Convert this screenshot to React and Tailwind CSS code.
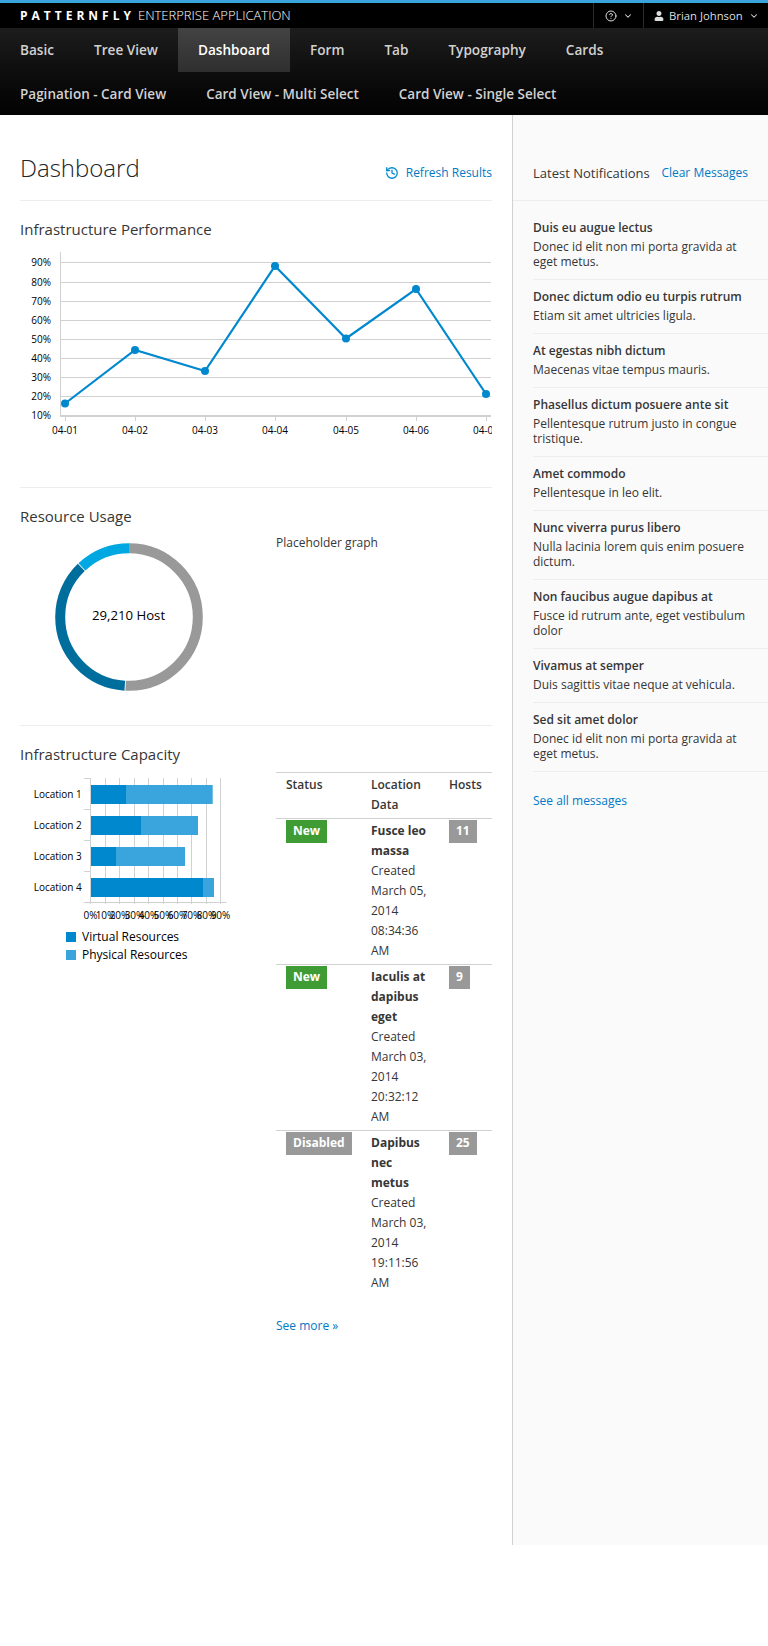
import { ChevronDown, CircleHelp, History } from "lucide-react";
import { FaUser } from "react-icons/fa";

const navRows = [
  ["Basic", "Tree View", "Dashboard", "Form", "Tab", "Typography", "Cards"],
  ["Pagination - Card View", "Card View - Multi Select", "Card View - Single Select"],
];

const notifications = [
  ["Duis eu augue lectus", "Donec id elit non mi porta gravida at eget metus."],
  ["Donec dictum odio eu turpis rutrum", "Etiam sit amet ultricies ligula."],
  ["At egestas nibh dictum", "Maecenas vitae tempus mauris."],
  ["Phasellus dictum posuere ante sit", "Pellentesque rutrum justo in congue tristique."],
  ["Amet commodo", "Pellentesque in leo elit."],
  ["Nunc viverra purus libero", "Nulla lacinia lorem quis enim posuere dictum."],
  ["Non faucibus augue dapibus at", "Fusce id rutrum ante, eget vestibulum dolor"],
  ["Vivamus at semper", "Duis sagittis vitae neque at vehicula."],
  ["Sed sit amet dolor", "Donec id elit non mi porta gravida at eget metus."],
];

const rows = [
  { status: "New", color: "bg-[#3f9c35]", title: "Fusce leo massa", date: "March 05, 2014 08:34:36 AM", hosts: 11 },
  { status: "New", color: "bg-[#3f9c35]", title: "Iaculis at dapibus eget", date: "March 03, 2014 20:32:12 AM", hosts: 9 },
  { status: "Disabled", color: "bg-[#999999]", title: "Dapibus nec metus", date: "March 03, 2014 19:11:56 AM", hosts: 25 },
];

const linePoints = [
  [65, 403.5],
  [135, 350],
  [205, 371],
  [275, 266],
  [346, 338.5],
  [416, 289],
  [486, 394],
];
const lineGrid = [
  [262.5, "90%"],
  [282.5, "80%"],
  [301.5, "70%"],
  [320.5, "60%"],
  [339.5, "50%"],
  [358.5, "40%"],
  [377.5, "30%"],
  [396.5, "20%"],
  [415.5, "10%"],
];
const lineDates = ["04-01", "04-02", "04-03", "04-04", "04-05", "04-06", "04-07"];

const LineChart = () => (
  <svg width="472" height="190" viewBox="20 250 472 190" className="block">
    {lineGrid.map(([y, label]) => (
      <g key={label}>
        <line x1="60" x2="491" y1={y} y2={y} stroke="#d1d1d1" strokeWidth="1" />
        <text x="51" y={y + 3.5} textAnchor="end" fontSize="10" fill="#000">{label}</text>
      </g>
    ))}
    <line x1="60.5" x2="60.5" y1="252" y2="417" stroke="#d1d1d1" />
    <line x1="60" x2="491" y1="416.5" y2="416.5" stroke="#d1d1d1" />
    {linePoints.map(([x], i) => (
      <g key={i}>
        <line x1={x + 0.5} x2={x + 0.5} y1="417" y2="421" stroke="#d1d1d1" />
        <text x={x} y="434" textAnchor="middle" fontSize="10" fill="#000">{lineDates[i]}</text>
      </g>
    ))}
    <polyline points={linePoints.map((p) => p.join(",")).join(" ")} fill="none" stroke="#0088ce" strokeWidth="2.2" />
    {linePoints.map(([x, y], i) => (
      <circle key={i} cx={x} cy={y} r="4" fill="#0088ce" />
    ))}
  </svg>
);

const Donut = () => (
  <svg width="150" height="150" viewBox="-75 -75 150 150" className="block">
    <circle r="68.8" fill="none" stroke="#999999" strokeWidth="10" pathLength="100" strokeDasharray="50.8 49.2" transform="rotate(-90)" />
    <circle r="68.8" fill="none" stroke="#006e9c" strokeWidth="10" pathLength="100" strokeDasharray="36.8 63.2" strokeDashoffset="-51" transform="rotate(-90)" />
    <circle r="68.8" fill="none" stroke="#00a8e1" strokeWidth="10" pathLength="100" strokeDasharray="12 88" strokeDashoffset="-88" transform="rotate(-90)" />
    <text x="-0.5" y="3" textAnchor="middle" fontSize="13.2" fill="#000">29,210 Host</text>
  </svg>
);

const barData = [
  ["Location 1", 785, 126, 212.7],
  ["Location 2", 816, 141, 198],
  ["Location 3", 847, 116, 185],
  ["Location 4", 878, 203, 214],
];
const barTicks = [90.5, 105.5, 119.5, 134.5, 148.5, 163.5, 177.5, 191.5, 206.5, 220.5];

const BarChart = () => (
  <svg width="236" height="148" viewBox="20 775 236 148" className="block">
    {barTicks.map((x, i) => (
      <g key={x}>
        <line x1={x} x2={x} y1="778" y2="904" stroke="#d1d1d1" />
        <text x={x} y="919" textAnchor="middle" fontSize="10" fill="#000">{i * 10}%</text>
      </g>
    ))}
    <line x1="90.5" x2="226.7" y1="902.5" y2="902.5" stroke="#d1d1d1" />
    {[778.5, 809.5, 840.5, 871.5, 902.5].map((y) => (
      <line key={y} x1="84" x2="90.5" y1={y} y2={y} stroke="#d1d1d1" />
    ))}
    {barData.map(([label, y, a, b]) => (
      <g key={label}>
        <rect x="91" y={y} width={a - 91} height="19" fill="#0088ce" />
        <rect x={a} y={y} width={b - a} height="19" fill="#39a5dc" />
        <text x="33.7" y={y + 13} fontSize="10" fill="#000">{label}</text>
      </g>
    ))}
  </svg>
);

const App = () => (
  <div className="h-[1646px] bg-white font-['Open_Sans',sans-serif] text-[13px] leading-[20px] text-[#363636]">
    <div className="h-[28px] border-t-[3px] border-[#39a5dc] bg-black flex justify-between">
      <div className="pl-5 flex items-center text-white leading-none">
        <span className="font-bold tracking-[4px] text-[12px]">PATTERNFLY</span>
        <span className="ml-[3px] font-light text-white text-[13px]">ENTERPRISE APPLICATION</span>
      </div>
      <div className="flex text-[#dedede] text-[11.3px] leading-none">
        <div className="w-[50px] border-l border-[#2b2b2b] flex items-center pl-[11px] gap-[6px]">
          <CircleHelp size={12} strokeWidth={2} />
          <ChevronDown size={10} strokeWidth={2.5} />
        </div>
        <div className="w-[125px] border-l border-[#2b2b2b] flex items-center pl-[10px]">
          <FaUser size={10} />
          <span className="ml-[5px] whitespace-nowrap">Brian Johnson</span>
          <ChevronDown size={10} strokeWidth={2.5} className="ml-[6px]" />
        </div>
      </div>
    </div>
    <nav className="h-[87px] bg-gradient-to-b from-[#1d1d1d] to-[#030303] font-semibold text-[#d1d1d1]">
      {navRows.map((row, i) => (
        <div key={i} className={i === 0 ? "flex h-[44px] text-[13.6px]" : "flex h-[43px] text-[13.5px]"}>
          {row.map((item) => (
            <a
              key={item}
              className={
                item === "Dashboard"
                  ? "px-5 flex items-center whitespace-nowrap text-white bg-gradient-to-b from-[#434343] to-[#2f2f2f]"
                  : "px-5 flex items-center whitespace-nowrap"
              }
            >
              {item}
            </a>
          ))}
        </div>
      ))}
    </nav>

    <div className="flex h-[1430px]">
      <main className="w-[512px] shrink-0 px-5">
        <div className="h-[86px] border-b border-[#ededed] flex items-end justify-between pb-[17px]">
          <h1 className="text-[24px] leading-[30px] font-light text-[#202428]">Dashboard</h1>
          <a className="flex items-center text-[#0079c6] text-[12px] leading-[20px]">
            <History size={14} strokeWidth={2.2} className="mr-[7px] text-[#0088ce]" />
            Refresh Results
          </a>
        </div>

        <section className="h-[287px] pt-[18px] border-b border-[#ededed]">
          <h2 className="text-[15px] leading-[20px] text-[#363636]">Infrastructure Performance</h2>
          <div className="mt-[11px]">
            <LineChart />
          </div>
        </section>

        <section className="h-[238px] pt-[18px] border-b border-[#ededed]">
          <h2 className="text-[15px] leading-[20px] text-[#363636]">Resource Usage</h2>
          <div className="flex mt-[7px]">
            <div className="ml-[34px] w-[222px] pt-[9px]">
              <Donut />
            </div>
            <p className="text-[12px]">Placeholder graph</p>
          </div>
        </section>

        <section className="flex">
          <div className="w-[256px] shrink-0 pt-[18px]">
            <h2 className="text-[15px] leading-[20px] text-[#363636]">Infrastructure Capacity</h2>
            <div className="mt-[11px]">
              <BarChart />
            </div>
            <div className="mt-[5px] ml-[46px] text-[12px] leading-[18px] text-black">
              <div className="flex items-center gap-[6px]">
                <span className="w-[10px] h-[10px] bg-[#0088ce]" />
                Virtual Resources
              </div>
              <div className="flex items-center gap-[6px]">
                <span className="w-[10px] h-[10px] bg-[#39a5dc]" />
                Physical Resources
              </div>
            </div>
          </div>
          <div className="w-[216px] mt-[46px]">
            <table className="w-full table-fixed border-t border-[#d1d1d1] text-[12px] leading-[20px]">
              <thead>
                <tr className="border-b border-[#d1d1d1] align-top">
                  <th className="w-[95px] text-left font-semibold pl-[10px] pt-[2px] pb-[3px]">Status</th>
                  <th className="w-[78px] text-left font-semibold pt-[2px] pb-[3px] pr-[18px]">Location Data</th>
                  <th className="text-left font-semibold pt-[2px] pb-[3px]">Hosts</th>
                </tr>
              </thead>
              <tbody>
                {rows.map((r) => (
                  <tr key={r.title} className="border-b border-[#d1d1d1] last:border-b-0 align-top">
                    <td className="pl-[10px] pt-[1px] pb-[4px]">
                      <span className={`inline-block h-[23px] px-[7px] text-white font-bold leading-[21px] ${r.color}`}>{r.status}</span>
                    </td>
                    <td className="pt-[2px] pb-[3px] pr-[18px]">
                      <strong className="font-bold block">{r.title}</strong>
                      Created {r.date}
                    </td>
                    <td className="pt-[1px] pb-[4px]">
                      <span className="inline-block h-[23px] px-[7px] bg-[#999999] text-white font-bold leading-[21px]">{r.hosts}</span>
                    </td>
                  </tr>
                ))}
              </tbody>
            </table>
            <a className="block mt-[20px] text-[#0079c6] text-[12px]">See more »</a>
          </div>
        </section>
      </main>

      <aside className="flex-1 border-l border-[#d1d1d1] bg-[#fafafa]">
        <div className="h-[86px] border-b border-[#ededed] flex items-end justify-between pl-5 pr-5 pb-[17px] leading-[20px]">
          <span className="text-[13px] text-[#363636]">Latest Notifications</span>
          <a className="text-[12px] text-[#0079c6]">Clear Messages</a>
        </div>
        <ul className="pl-5 pt-[10px] text-[12px] leading-[15px]">
          {notifications.map(([title, body]) => (
            <li key={title} className="border-b border-[#ededed] pt-[7px] pb-[10px] pr-5">
              <div className="font-semibold leading-[20px] mb-[1px]">{title}</div>
              <div>{body}</div>
            </li>
          ))}
        </ul>
        <a className="block pl-5 mt-[19px] text-[#0079c6] text-[12px]">See all messages</a>
      </aside>
    </div>
  </div>
);

export default App;
